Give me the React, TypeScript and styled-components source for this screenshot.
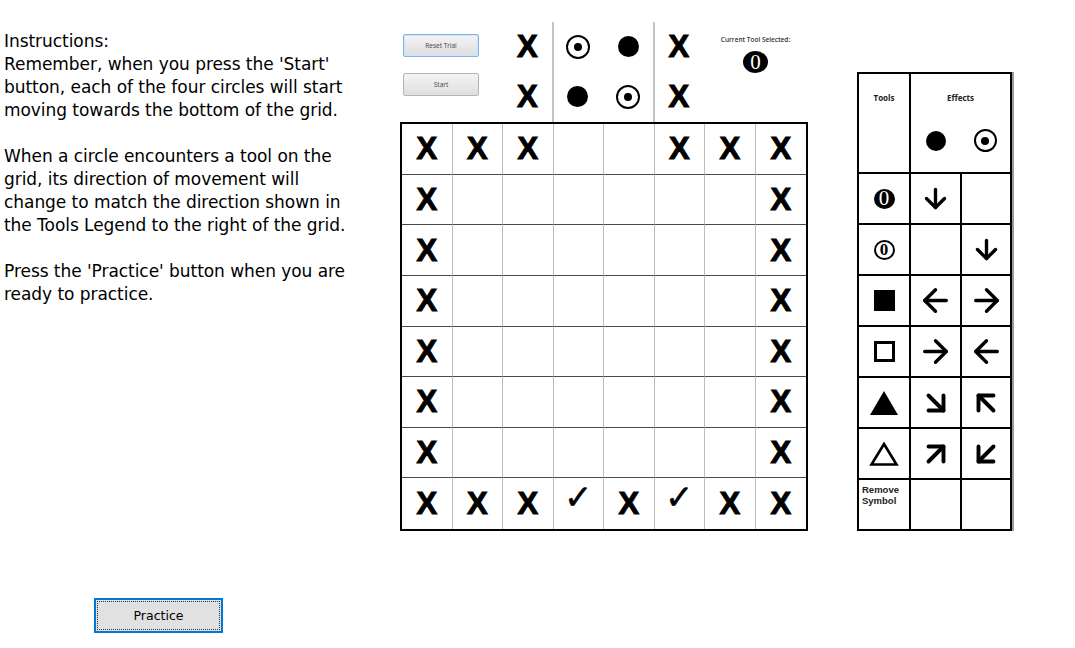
import React from "react";
import styled, { createGlobalStyle } from "styled-components";
import {
  ArrowDown,
  ArrowLeft,
  ArrowRight,
  ArrowDownRight,
  ArrowUpLeft,
  ArrowUpRight,
  ArrowDownLeft,
} from "lucide-react";

const Global = createGlobalStyle`
  html, body { margin: 0; padding: 0; background: #ffffff; }
  body { font-family: "DejaVu Sans", Tahoma, sans-serif; color: #000; }
  * { box-sizing: border-box; }
`;

const Page = styled.div`
  display: flex;
  align-items: flex-start;
  width: 1075px;
  height: 648px;
  overflow: hidden;
`;

const LeftColumn = styled.div`
  width: 400px;
  height: 648px;
  display: flex;
  flex-direction: column;
  padding: 30px 0 15px 4px;
`;

const Instructions = styled.div`
  font-family: "DejaVu Sans", Tahoma, sans-serif;
  font-size: 17px;
  line-height: 23px;
  letter-spacing: -0.05px;
`;

const Para = styled.p`
  margin: 0 0 23px 0;
`;

const Line = styled.span`
  display: block;
  white-space: nowrap;
`;

const PracticeButton = styled.button`
  margin-top: auto;
  margin-left: 90px;
  width: 129px;
  height: 35px;
  background: #e1e1e1;
  border: 2px solid #0078d7;
  outline: 1px dotted #333;
  outline-offset: -4px;
  font-family: "DejaVu Sans", Tahoma, sans-serif;
  font-size: 12.5px;
  color: #000;
  padding: 0;
`;

const Middle = styled.div`
  width: 408px;
  padding-top: 20px;
  display: flex;
  flex-direction: column;
`;

const TopArea = styled.div`
  display: grid;
  grid-template-columns: repeat(8, 1fr);
  grid-template-rows: repeat(2, 51px);
  padding: 0 2px;
  height: 102px;
`;

const ButtonStack = styled.div`
  grid-column: 1 / 3;
  grid-row: 1 / 3;
  display: flex;
  flex-direction: column;
  gap: 16px;
  padding: 14px 0 0 1px;
`;

const SmallButton = styled.button<{ $focused?: boolean }>`
  width: 76px;
  height: 23px;
  background: linear-gradient(#f4f4f4, #dedede);
  border: 1px solid ${(p) => (p.$focused ? "#7eb4ea" : "#b5b5b5")};
  box-shadow: ${(p) => (p.$focused ? "inset 0 0 0 1px #cfe6fb" : "none")};
  border-radius: 2px;
  font-family: "Open Sans", "Liberation Sans", sans-serif;
  font-size: 6.5px;
  color: #444;
  padding: 0;
`;

const TopCell = styled.div<{ $col: number; $row: number; $sep?: boolean }>`
  grid-column: ${(p) => p.$col};
  grid-row: ${(p) => p.$row};
  display: flex;
  align-items: center;
  justify-content: center;
  border-right: ${(p) => (p.$sep ? "2px solid #c4c4c4" : "2px solid transparent")};
  margin-top: ${(p) => (p.$row === 1 ? "2px" : "0")};
`;

const ToolSelected = styled.div`
  grid-column: 7 / 9;
  grid-row: 1 / 3;
  display: flex;
  flex-direction: column;
  align-items: center;
  padding-top: 15px;
  gap: 7px;
`;

const ToolLabel = styled.div`
  font-family: "Open Sans", "Liberation Sans", sans-serif;
  font-size: 6.5px;
  font-weight: 600;
  color: #333;
`;

const Board = styled.div`
  width: 408px;
  height: 409px;
  border: 2.5px solid #000;
  display: grid;
  grid-template-columns: repeat(8, 1fr);
  grid-template-rows: repeat(8, 1fr);
`;

const Cell = styled.div<{ $lastCol: boolean; $lastRow: boolean }>`
  display: flex;
  align-items: center;
  justify-content: center;
  border-right: ${(p) => (p.$lastCol ? "none" : "1px solid #bdbdbd")};
  border-bottom: ${(p) => (p.$lastRow ? "none" : "1px solid #4a4a4a")};
`;

const XMark = styled.span`
  font-family: "Liberation Sans", Arial, sans-serif;
  font-weight: 900;
  font-size: 31px;
  line-height: 1;
  -webkit-text-stroke: 1px #000;
  color: #000;
`;

const Check = styled.span`
  font-family: "DejaVu Sans", sans-serif;
  font-size: 34px;
  line-height: 1;
  margin-bottom: 14px;
  -webkit-text-stroke: 0.5px #000;
`;

const Dot = styled.span<{ $size?: number }>`
  display: inline-block;
  width: ${(p) => p.$size ?? 21}px;
  height: ${(p) => p.$size ?? 21}px;
  border-radius: 50%;
  background: #000;
`;

const Ring = styled.span<{ $size?: number }>`
  display: inline-flex;
  align-items: center;
  justify-content: center;
  width: ${(p) => p.$size ?? 24}px;
  height: ${(p) => p.$size ?? 24}px;
  border-radius: 50%;
  border: 2.5px solid #000;
  &::after {
    content: "";
    width: 8px;
    height: 8px;
    border-radius: 50%;
    background: #000;
  }
`;

const ZeroBadge = styled.span<{ $outline?: boolean; $large?: boolean }>`
  display: inline-flex;
  align-items: center;
  justify-content: center;
  width: ${(p) => (p.$large ? 25 : 21)}px;
  height: ${(p) => (p.$large ? 22 : 20)}px;
  border-radius: 50%;
  background: ${(p) => (p.$outline ? "#fff" : "#000")};
  border: ${(p) => (p.$outline ? "2.5px solid #000" : "none")};
  color: ${(p) => (p.$outline ? "#000" : "#fff")};
  font-family: "Liberation Serif", serif;
  font-weight: ${(p) => (p.$outline ? 700 : 400)};
  font-size: ${(p) => (p.$large ? "21px" : p.$outline ? "17px" : "21px")};
  line-height: 1;
`;

const Legend = styled.div`
  margin-left: 49px;
  margin-top: 72px;
  display: grid;
  grid-template-columns: 52px 51px 50px;
  grid-template-rows: 100px repeat(7, 51px);
  border-top: 2px solid #000;
  border-left: 2px solid #000;
  box-shadow: 2px 0 0 #9a9a9a;
`;

const LegendCell = styled.div<{ $align?: "center" | "start" }>`
  border-right: 2px solid #000;
  border-bottom: 2px solid #000;
  display: flex;
  align-items: ${(p) => (p.$align === "start" ? "flex-start" : "center")};
  justify-content: ${(p) => (p.$align === "start" ? "flex-start" : "center")};
  padding: ${(p) => (p.$align === "start" ? "4px 0 0 3px" : "0")};
`;

const HeaderCell = styled.div<{ $span?: boolean }>`
  grid-column: ${(p) => (p.$span ? "2 / 4" : "1")};
  border-right: 2px solid #000;
  border-bottom: 2px solid #000;
  display: flex;
  flex-direction: column;
  align-items: stretch;
  padding-top: 18px;
`;

const HeaderLabel = styled.div`
  text-align: center;
  font-family: "Open Sans", "Liberation Sans", sans-serif;
  font-size: 8px;
  font-weight: 700;
  color: #222;
`;

const HeaderSymbols = styled.div`
  display: grid;
  grid-template-columns: 1fr 1fr;
  justify-items: center;
  align-items: center;
  margin-top: 26px;
`;

const RemoveLabel = styled.div`
  font-family: "Liberation Sans", Arial, sans-serif;
  font-size: 9.5px;
  font-weight: 700;
  line-height: 11px;
  color: #222;
`;

const Square = styled.span<{ $outline?: boolean }>`
  display: inline-block;
  width: 21px;
  height: 21px;
  background: ${(p) => (p.$outline ? "#fff" : "#000")};
  border: ${(p) => (p.$outline ? "3.5px solid #000" : "none")};
`;

const Triangle = ({ outline }: { outline?: boolean }) => (
  <svg width="30" height="26" viewBox="0 0 30 26">
    <polygon
      points={outline ? "15,3 27.5,23.5 2.5,23.5" : "15,1 29,25 1,25"}
      fill={outline ? "#fff" : "#000"}
      stroke="#000"
      strokeWidth={outline ? 2.6 : 0}
      strokeLinejoin="miter"
    />
  </svg>
);

type Arrow = React.ComponentType<{ size?: number; strokeWidth?: number; color?: string }>;

const arrowSizes = {
  vertical: { size: 31, stroke: 2.6 },
  horizontal: { size: 37, stroke: 2.2 },
  diagonal: { size: 36, stroke: 2.6 },
};

const ArrowGlyph = ({ icon: Icon, kind }: { icon: Arrow; kind: keyof typeof arrowSizes }) => (
  <Icon size={arrowSizes[kind].size} strokeWidth={arrowSizes[kind].stroke} color="#000" />
);

const boardRows: string[][] = [
  ["X", "X", "X", "", "", "X", "X", "X"],
  ["X", "", "", "", "", "", "", "X"],
  ["X", "", "", "", "", "", "", "X"],
  ["X", "", "", "", "", "", "", "X"],
  ["X", "", "", "", "", "", "", "X"],
  ["X", "", "", "", "", "", "", "X"],
  ["X", "", "", "", "", "", "", "X"],
  ["X", "X", "X", "✓", "X", "✓", "X", "X"],
];

const renderSymbol = (s: string) => {
  if (s === "X") return <XMark>X</XMark>;
  if (s === "✓") return <Check>✓</Check>;
  if (s === "dot") return <Dot />;
  if (s === "ring") return <Ring />;
  return null;
};

const topRows: string[][] = [
  ["X", "ring", "dot", "X"],
  ["X", "dot", "ring", "X"],
];

type LegendRow = { tool: React.ReactNode; a?: React.ReactNode; b?: React.ReactNode };

const legendRows: LegendRow[] = [
  { tool: <ZeroBadge>0</ZeroBadge>, a: <ArrowGlyph icon={ArrowDown} kind="vertical" /> },
  { tool: <ZeroBadge $outline>0</ZeroBadge>, b: <ArrowGlyph icon={ArrowDown} kind="vertical" /> },
  {
    tool: <Square />,
    a: <ArrowGlyph icon={ArrowLeft} kind="horizontal" />,
    b: <ArrowGlyph icon={ArrowRight} kind="horizontal" />,
  },
  {
    tool: <Square $outline />,
    a: <ArrowGlyph icon={ArrowRight} kind="horizontal" />,
    b: <ArrowGlyph icon={ArrowLeft} kind="horizontal" />,
  },
  {
    tool: <Triangle />,
    a: <ArrowGlyph icon={ArrowDownRight} kind="diagonal" />,
    b: <ArrowGlyph icon={ArrowUpLeft} kind="diagonal" />,
  },
  {
    tool: <Triangle outline />,
    a: <ArrowGlyph icon={ArrowUpRight} kind="diagonal" />,
    b: <ArrowGlyph icon={ArrowDownLeft} kind="diagonal" />,
  },
];

export default function App() {
  return (
    <>
      <Global />
      <Page>
        <LeftColumn>
          <Instructions>
            <Para>
              <Line>Instructions:</Line>
              <Line>Remember, when you press the 'Start'</Line>
              <Line>button, each of the four circles will start</Line>
              <Line>moving towards the bottom of the grid.</Line>
            </Para>
            <Para>
              <Line>When a circle encounters a tool on the</Line>
              <Line>grid, its direction of movement will</Line>
              <Line>change to match the direction shown in</Line>
              <Line>the Tools Legend to the right of the grid.</Line>
            </Para>
            <Para>
              <Line>Press the 'Practice' button when you are</Line>
              <Line>ready to practice.</Line>
            </Para>
          </Instructions>
          <PracticeButton>Practice</PracticeButton>
        </LeftColumn>

        <Middle>
          <TopArea>
            <ButtonStack>
              <SmallButton $focused>Reset Trial</SmallButton>
              <SmallButton>Start</SmallButton>
            </ButtonStack>
            {topRows.map((row, r) =>
              row.map((s, i) => (
                <TopCell key={`${r}-${i}`} $col={i + 3} $row={r + 1} $sep={i === 0 || i === 2}>
                  {renderSymbol(s)}
                </TopCell>
              ))
            )}
            <ToolSelected>
              <ToolLabel>Current Tool Selected:</ToolLabel>
              <ZeroBadge $large>0</ZeroBadge>
            </ToolSelected>
          </TopArea>
          <Board>
            {boardRows.map((row, r) =>
              row.map((s, c) => (
                <Cell key={`${r}-${c}`} $lastCol={c === 7} $lastRow={r === 7}>
                  {renderSymbol(s)}
                </Cell>
              ))
            )}
          </Board>
        </Middle>

        <Legend>
          <HeaderCell>
            <HeaderLabel>Tools</HeaderLabel>
          </HeaderCell>
          <HeaderCell $span>
            <HeaderLabel>Effects</HeaderLabel>
            <HeaderSymbols>
              <Dot $size={20} />
              <Ring $size={23} />
            </HeaderSymbols>
          </HeaderCell>
          {legendRows.map((row, i) => (
            <React.Fragment key={i}>
              <LegendCell>{row.tool}</LegendCell>
              <LegendCell>{row.a}</LegendCell>
              <LegendCell>{row.b}</LegendCell>
            </React.Fragment>
          ))}
          <LegendCell $align="start">
            <RemoveLabel>
              Remove
              <br />
              Symbol
            </RemoveLabel>
          </LegendCell>
          <LegendCell />
          <LegendCell />
        </Legend>
      </Page>
    </>
  );
}
